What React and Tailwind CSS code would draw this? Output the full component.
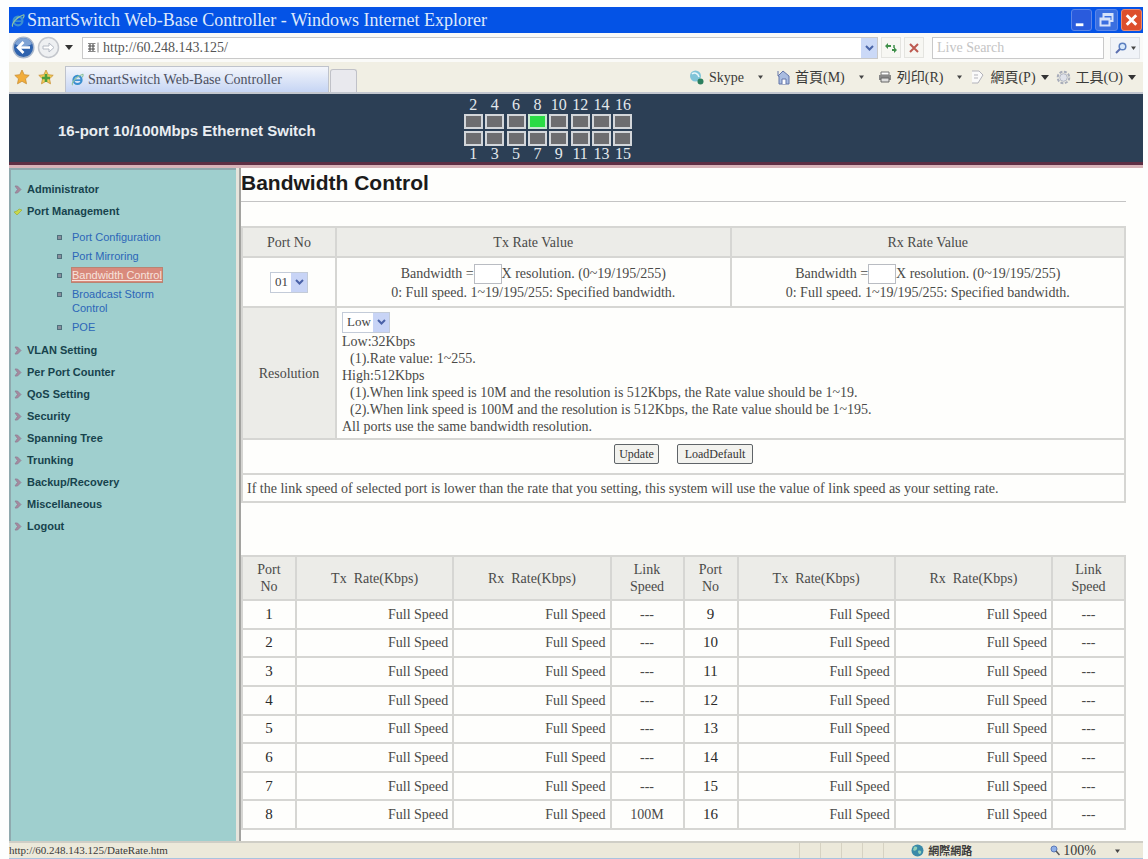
import React from "react";

const serif = 'font-["Liberation_Serif","Noto_Sans_CJK_TC",serif]';
const sans = 'font-["Liberation_Sans",Arial,sans-serif]';

const topPorts = [2, 4, 6, 8, 10, 12, 14, 16];
const bottomPorts = [1, 3, 5, 7, 9, 11, 13, 15];

function Caret() {
  return (
    <svg className="h-[5px] w-[8px] shrink-0" viewBox="0 0 8 5" aria-hidden="true">
      <path d="M0 0h8L4 5z" fill="#333" />
    </svg>
  );
}

function SmallCaret() {
  return (
    <svg className="h-[4px] w-[5px] shrink-0" viewBox="0 0 5 4" aria-hidden="true">
      <path d="M0 .5h5L2.500 4z" fill="#444" />
    </svg>
  );
}

function IeIcon({ className }) {
  return (
    <svg className={className} viewBox="0 0 16 16" aria-hidden="true">
      <circle cx="8" cy="8.500" r="5" fill="none" stroke="#3b8fd0" strokeWidth="2.600" />
      <path d="M4 8.800h8.500" stroke="#3b8fd0" strokeWidth="2" />
      <path d="M2 15C0 12 6 4 14.500 1.500c1 .8 0 3-1 4" fill="none" stroke="#8fc4a0" strokeWidth="1.300" />
    </svg>
  );
}

function PageIcon() {
  return (
    <svg className="h-[13px] w-[13px] shrink-0" viewBox="0 0 13 13" aria-hidden="true">
      <path d="M1 2.500h7.500M1 10.500h7.500M11 1.500v10" stroke="#888" strokeWidth="1" />
      <path d="M3 3v7M6 3v7M1 5h7M1 8h7" stroke="#555" strokeWidth="1.200" />
    </svg>
  );
}

function TitleBar() {
  return (
    <header className="flex h-[26px] items-center bg-[#0453e6] pl-[2px] pr-[1px]">
      <IeIcon className="mr-[2px] h-[15px] w-[14px]" />
      <h1 className="flex-1 whitespace-nowrap text-[18px] leading-[24px] text-[#dfe9fb]">
        SmartSwitch Web-Base Controller - Windows Internet Explorer
      </h1>
      <div className="flex gap-[3px]">
        <button aria-label="Minimize" className="h-[22px] w-[21px] rounded-[3px] border border-[#5b86e8] bg-[#2a5bdd]">
          <svg viewBox="0 0 20 20" className="h-full w-full" aria-hidden="true">
            <path d="M4 15h8" stroke="#fff" strokeWidth="3" />
          </svg>
        </button>
        <button aria-label="Restore" className="h-[22px] w-[23px] rounded-[3px] border border-[#5b86e8] bg-[#3a6fe0]">
          <svg viewBox="0 0 20 20" className="h-full w-full" aria-hidden="true">
            <path d="M7 8V4h9v7h-3M7 5h9" fill="none" stroke="#d5e2fa" strokeWidth="2" />
            <path d="M4 8.500h9v7H4zM4 9.500h9" fill="none" stroke="#d5e2fa" strokeWidth="2" />
          </svg>
        </button>
        <button aria-label="Close" className="h-[22px] w-[21px] rounded-[3px] border border-[#e88a70] bg-[#dd4f2c]">
          <svg viewBox="0 0 20 20" className="h-full w-full" aria-hidden="true">
            <path d="M5 5l10 10M15 5L5 15" stroke="#fff" strokeWidth="3" />
          </svg>
        </button>
      </div>
    </header>
  );
}

function AddressRow() {
  return (
    <div className="flex h-[29px] items-center bg-[#fafaf8] pl-[3px] pr-[3px]">
      <button aria-label="Back">
        <svg className="h-[23px] w-[23px]" viewBox="0 0 23 23" aria-hidden="true">
          <circle cx="11.500" cy="11.500" r="10.300" fill="#2f63ae" stroke="#a9b7cb" strokeWidth="1.500" />
          <path d="M3 8a9 9 0 0 1 17 0c-5 3-12 3-17 0z" fill="#7fa3d4" />
          <path d="M18 11.500H6M11.500 6L6 11.500l5.500 5.500" fill="none" stroke="#fff" strokeWidth="2.600" />
        </svg>
      </button>
      <button aria-label="Forward" className="ml-[2px]">
        <svg className="h-[23px] w-[23px]" viewBox="0 0 23 23" aria-hidden="true">
          <circle cx="11.500" cy="11.500" r="10" fill="#eef0f2" stroke="#c3c6cc" strokeWidth="1.500" />
          <path d="M12 7l5 4.500-5 4.500v-3H6v-3h6z" fill="#fff" stroke="#b4bac4" />
        </svg>
      </button>
      <button aria-label="Recent pages" className="ml-[5px]">
        <Caret />
      </button>
      <div className="ml-[9px] flex h-[22px] flex-1 items-center border border-[#c9c9c9] bg-white pl-[4px]">
        <PageIcon />
        <input
          aria-label="Address"
          defaultValue="http://60.248.143.125/"
          className="ml-[3px] min-w-0 flex-1 bg-transparent text-[14px] leading-[18px] text-[#555] outline-none"
        />
        <button aria-label="Address history" className="flex h-full w-[16px] items-center justify-center bg-[#cbd9f7]">
          <svg className="h-[6px] w-[9px]" viewBox="0 0 9 6" aria-hidden="true">
            <path d="M1 1l3.500 3.500L8 1" fill="none" stroke="#4a65a8" strokeWidth="2" />
          </svg>
        </button>
      </div>
      <button aria-label="Refresh" className="ml-[3px] flex h-[21px] w-[20px] items-center justify-center border border-[#e4e4e0] bg-[#f7f7f3]">
        <svg className="h-[12px] w-[14px]" viewBox="0 0 14 12" aria-hidden="true">
          <path d="M1 4l3-3v2h3v2H4v2z" fill="#3f8f4a" />
          <path d="M13 8l-3 3V9H8V7h2V5z" fill="#3f8f4a" />
          <path d="M10 3v3" stroke="#3f8f4a" strokeWidth="1.500" />
        </svg>
      </button>
      <button aria-label="Stop" className="ml-[3px] flex h-[21px] w-[20px] items-center justify-center border border-[#e4e4e0] bg-[#f7f7f3]">
        <svg className="h-[10px] w-[10px]" viewBox="0 0 10 10" aria-hidden="true">
          <path d="M1 1l8 8M9 1L1 9" stroke="#bd5a50" strokeWidth="2" />
        </svg>
      </button>
      <input
        aria-label="Search"
        placeholder="Live Search"
        className="ml-[8px] h-[22px] w-[172px] border border-[#c9c9c9] bg-white px-[4px] text-[14px] text-[#555] outline-none placeholder:text-[#c4c4c4]"
      />
      <div className="ml-[6px] flex h-[22px] w-[30px] items-center justify-center gap-[4px] border border-[#dcdfe4] bg-[#f0f3f8]">
        <button aria-label="Run search">
          <svg className="h-[12px] w-[12px]" viewBox="0 0 12 12" aria-hidden="true">
            <circle cx="7.500" cy="4.500" r="3.300" fill="#d7e8fb" stroke="#5b7fc0" strokeWidth="1.500" />
            <path d="M5 7L1 11" stroke="#5b6fb0" strokeWidth="2" />
          </svg>
        </button>
        <button aria-label="Search options">
          <SmallCaret />
        </button>
      </div>
    </div>
  );
}

function Star({ fill, children }) {
  return (
    <svg className="h-[16px] w-[16px]" viewBox="0 0 16 16" aria-hidden="true">
      <path d="M8 1l2.200 4.700 5 .6-3.700 3.500 1 5L8 12.300 3.500 14.800l1-5L.8 6.300l5-.6z" fill={fill} stroke="#c98f35" strokeWidth=".8" />
      {children}
    </svg>
  );
}

function TabRow() {
  const command = "flex items-center gap-[5px] whitespace-nowrap";
  return (
    <div className="flex h-[32px] items-center border-b-2 border-[#c3c7cf] bg-[#f1efe4] pr-[7px]">
      <div className="flex w-[56px] shrink-0 items-center gap-[8px] pl-[5px]">
        <button aria-label="Favorites">
          <Star fill="#f2ad3a" />
        </button>
        <button aria-label="Add to favorites">
          <Star fill="#f0cf58">
            <path d="M8 5v8M4 9h8" stroke="#4d9d3c" strokeWidth="2.600" />
          </Star>
        </button>
      </div>
      <div className="flex h-[26px] w-[264px] shrink-0 items-center self-end border border-b-0 border-[#bfc3cc] bg-gradient-to-b from-[#f4f6fb] to-[#c6d5f4] pl-[5px]">
        <IeIcon className="h-[13px] w-[13px]" />
        <span className="ml-[4px] whitespace-nowrap text-[14px] text-[#4c5060]">SmartSwitch Web-Base Controller</span>
      </div>
      <button aria-label="New tab" className="ml-[1px] h-[23px] w-[27px] shrink-0 self-end rounded-t-[3px] border border-b-0 border-[#c0c1c8] bg-[#e9e9ee]" />
      <nav aria-label="Commands" className="ml-auto flex items-center text-[14px] text-[#3a3a38]">
        <button className={command}>
          <svg className="h-[15px] w-[15px]" viewBox="0 0 15 15" aria-hidden="true">
            <circle cx="6.500" cy="6" r="5.500" fill="#7fc4d8" />
            <path d="M3 4c2-2 6-1 7 3" fill="none" stroke="#e8f7fb" strokeWidth="1.500" />
            <circle cx="11.500" cy="11.500" r="3" fill="#2c7f5e" />
          </svg>
          Skype
        </button>
        <span className="mx-[14px] flex"><SmallCaret /></span>
        <button className={command}>
          <svg className="h-[15px] w-[13px]" viewBox="0 0 13 15" aria-hidden="true">
            <path d="M1 6l5-5 6 5v8H2V6z" fill="#a9bce0" stroke="#6375a8" />
            <path d="M5 14V9h4v5M1 1v5" fill="#fff" stroke="#6375a8" />
          </svg>
          首頁(M)
        </button>
        <span className="mx-[14px] flex"><SmallCaret /></span>
        <button className={command}>
          <svg className="h-[12px] w-[14px]" viewBox="0 0 14 12" aria-hidden="true">
            <path d="M3 1h8v3H3z" fill="#fff" stroke="#777" />
            <path d="M1 4h12v5H1z" fill="#888" />
            <path d="M3 7h8v4H3z" fill="#ddd" stroke="#666" />
          </svg>
          列印(R)
        </button>
        <span className="ml-[14px] mr-[8px] flex"><SmallCaret /></span>
        <button className={command}>
          <svg className="h-[14px] w-[15px]" viewBox="0 0 15 14" aria-hidden="true">
            <path d="M2 1h7l4 4-5 8H2" fill="#fafafa" stroke="#b3b3ba" />
            <path d="M4 5h4M4 8h4" stroke="#b3b3ba" />
          </svg>
          網頁(P)
          <Caret />
        </button>
        <button className={command + " ml-[7px]"}>
          <svg className="h-[15px] w-[15px]" viewBox="0 0 15 15" aria-hidden="true">
            <circle cx="7.500" cy="7.500" r="5.800" fill="none" stroke="#a8adba" strokeWidth="2" strokeDasharray="3 1.500" />
            <circle cx="7.500" cy="7.500" r="3.800" fill="#dfe2ea" stroke="#b0b5c2" />
          </svg>
          工具(O)
          <Caret />
        </button>
      </nav>
    </div>
  );
}

function Led({ on }) {
  return (
    <span
      className={
        on
          ? "mx-auto h-[15px] w-[19px] border-2 border-[#c8e8d0] bg-[#2bdc45]"
          : "mx-auto h-[15px] w-[19px] border-2 border-[#d3d6da] bg-[#6d6d70]"
      }
    />
  );
}

function SwitchBanner() {
  return (
    <section className="flex h-[74px] border-b-[3px] border-[#d8b3b8] bg-[#2c3f55] shadow-[inset_0_-3px_0_#5e2f44]">
      <h2 className={`${sans} w-[40%] shrink-0 whitespace-nowrap pl-[49px] pt-[27px] text-[15px] font-bold leading-[20px] text-[#e9edf1]`}>
        16-port 10/100Mbps Ethernet Switch
      </h2>
      <div className="grid w-[171px] grid-cols-8 content-start gap-y-[2px] pt-[4px] text-center text-[16px] leading-[14px] text-[#e3e8ec]">
        {topPorts.map((n) => <span key={n}>{n}</span>)}
        {topPorts.map((n) => <Led key={n} on={n === 8} />)}
        {bottomPorts.map((n) => <Led key={n} />)}
        {bottomPorts.map((n) => <span key={n} className="-mt-px">{n}</span>)}
      </div>
    </section>
  );
}

const subItems = ["Port Configuration", "Port Mirroring", "Bandwidth Control", "Broadcast Storm Control", "POE"];
const laterItems = [
  "VLAN Setting",
  "Per Port Counter",
  "QoS Setting",
  "Security",
  "Spanning Tree",
  "Trunking",
  "Backup/Recovery",
  "Miscellaneous",
  "Logout",
];

function MenuItem({ label, open }) {
  return (
    <a href="#menu" className="flex h-[22px] items-center gap-[5px] pl-[5px] text-[11px] font-bold text-[#17434d]">
      <svg className="h-[9px] w-[8px]" viewBox="0 0 8 9" aria-hidden="true">
        {open ? (
          <path d="M0 5l3 3 5-5-3-1-2 2z" fill="#c9d84a" stroke="#9fb04a" strokeWidth=".8" />
        ) : (
          <path d="M1 1l2.500 3.500L1 8h2.500L7 4.500 3.500 1z" fill="#a58a9e" stroke="#8f7f94" strokeWidth=".8" />
        )}
      </svg>
      {label}
    </a>
  );
}

function Sidebar() {
  return (
    <nav aria-label="Switch menu" className={`${sans} w-[227px] shrink-0 border-l-2 border-t-2 border-[#8fa9ae] bg-[#9fcfce] pt-[8px]`}>
      <div className="-ml-[2px]">
        <MenuItem label="Administrator" />
        <MenuItem label="Port Management" open />
        <ul className="flex flex-col gap-[5px] pb-[5px] pt-[8px] text-[11px] leading-[14px]">
          {subItems.map((label) => (
            <li key={label} className="flex pl-[48px]">
              <span className="mr-[10px] mt-[5px] h-[5px] w-[5px] shrink-0 border border-[#4f6f7c] bg-[#8a8f9c]" />
              <a
                href="#page"
                className={
                  label === "Bandwidth Control"
                    ? "bg-[#d98a7c] text-[#f7e3dc] underline outline outline-1 outline-[#b98472]"
                    : "w-[96px] text-[#2c66b8]"
                }
              >
                {label}
              </a>
            </li>
          ))}
        </ul>
        {laterItems.map((label) => <MenuItem key={label} label={label} />)}
      </div>
    </nav>
  );
}

const cell = "border-2 border-[#d6d6d3]";
const head = "border-2 border-[#d6d6d3] bg-[#ecece8] font-normal";

function Dropdown({ label, options, className }) {
  return (
    <span className={`relative inline-block h-[21px] border border-[#c3cbd8] bg-white align-top ${className}`}>
      <select aria-label={label} className="block h-full w-full appearance-none bg-transparent pl-[4px] text-[13px] leading-[18px] text-[#444] outline-none">
        {options.map((o) => <option key={o}>{o}</option>)}
      </select>
      <span className="pointer-events-none absolute inset-y-0 right-0 flex w-[16px] items-center justify-center bg-[#c8d4f6]">
        <svg className="h-[6px] w-[9px]" viewBox="0 0 9 6" aria-hidden="true">
          <path d="M1 1l3.500 3.500L8 1" fill="none" stroke="#4a62a8" strokeWidth="2" />
        </svg>
      </span>
    </span>
  );
}

function RateCell({ name }) {
  return (
    <td className={`${cell} text-center`}>
      <label className="flex items-center justify-center">
        Bandwidth =
        <input aria-label={name} className="h-[20px] w-[28px] border border-[#b9bcc2] bg-white px-[2px] outline-none" />
        X resolution. (0~19/195/255)
      </label>
      <p>0: Full speed. 1~19/195/255: Specified bandwidth.</p>
    </td>
  );
}

function ControlTable() {
  const button = "h-[20px] rounded-[2px] border border-[#5f6468] bg-[#f2f2ee] text-[12px] leading-[16px] text-[#333]";
  const ports = Array.from({ length: 16 }, (_, i) => String(i + 1).padStart(2, "0"));
  return (
    <table className="w-full table-fixed border-collapse text-[14px] leading-[17px]">
      <colgroup>
        <col className="w-[94px]" />
        <col />
        <col />
      </colgroup>
      <tbody>
        <tr className="h-[30px]">
          <th className={head}>Port No</th>
          <th className={head}>Tx Rate Value</th>
          <th className={head}>Rx Rate Value</th>
        </tr>
        <tr className="h-[50px]">
          <td className={`${cell} text-center`}>
            <Dropdown label="Port No" options={ports} className="w-[38px]" />
          </td>
          <RateCell name="Tx bandwidth" />
          <RateCell name="Rx bandwidth" />
        </tr>
        <tr className="h-[132px]">
          <th className={head}>Resolution</th>
          <td className={`${cell} px-[5px]`} colSpan={2}>
            <Dropdown label="Resolution" options={["Low", "High"]} className="w-[48px]" />
            <p>Low:32Kbps</p>
            <p className="pl-[8px]">(1).Rate value: 1~255.</p>
            <p>High:512Kbps</p>
            <p className="pl-[8px]">(1).When link speed is 10M and the resolution is 512Kbps, the Rate value should be 1~19.</p>
            <p className="pl-[8px]">(2).When link speed is 100M and the resolution is 512Kbps, the Rate value should be 1~195.</p>
            <p>All ports use the same bandwidth resolution.</p>
          </td>
        </tr>
        <tr className="h-[35px]">
          <td className={cell} colSpan={3}>
            <div className="flex justify-center gap-[18px] pb-[5px]">
              <button className={`${button} w-[45px]`}>Update</button>
              <button className={`${button} w-[76px]`}>LoadDefault</button>
            </div>
          </td>
        </tr>
        <tr className="h-[28px]">
          <td className={`${cell} px-[4px]`} colSpan={3}>
            If the link speed of selected port is lower than the rate that you setting, this system will use the value of link speed as your setting rate.
          </td>
        </tr>
      </tbody>
    </table>
  );
}

function PortCells({ port }) {
  return (
    <>
      <td className={`${cell} text-center text-[15px] text-[#2a2a2a]`}>{port}</td>
      <td className={`${cell} pr-[4px] text-right`}>Full Speed</td>
      <td className={`${cell} pr-[4px] text-right`}>Full Speed</td>
      <td className={`${cell} text-center`}>{port === 8 ? "100M" : "---"}</td>
    </>
  );
}

function HeadCells() {
  return (
    <>
      <th className={head}>Port<br />No</th>
      <th className={`${head} whitespace-pre`}>{"Tx  Rate(Kbps)"}</th>
      <th className={`${head} whitespace-pre`}>{"Rx  Rate(Kbps)"}</th>
      <th className={head}>Link<br />Speed</th>
    </>
  );
}

function StatusTable() {
  return (
    <table className="mt-[52px] h-[275px] w-full table-fixed border-collapse text-[14px] leading-[17px]">
      <colgroup>
        <col className="w-[54px]" />
        <col />
        <col />
        <col className="w-[73px]" />
        <col className="w-[54px]" />
        <col />
        <col />
        <col className="w-[73px]" />
      </colgroup>
      <thead>
        <tr className="h-[44px]">
          <HeadCells />
          <HeadCells />
        </tr>
      </thead>
      <tbody>
        {bottomPorts.map((_, i) => (
          <tr key={i}>
            <PortCells port={i + 1} />
            <PortCells port={i + 9} />
          </tr>
        ))}
      </tbody>
    </table>
  );
}

function StatusBar() {
  return (
    <footer className="flex h-[19px] items-center border-b-2 border-t-2 border-b-[#a9c3e0] border-t-[#cfcec6] bg-[#ece9da] text-[#3a3a38]">
      <span className="flex-1 text-[11px]">http://60.248.143.125/DateRate.htm</span>
      <div className="flex h-full">
        {[0, 1, 2, 3, 4].map((i) => <span key={i} className="w-[21px] border-l border-[#d6d2c2]" />)}
      </div>
      <div className="flex w-[146px] items-center gap-[4px] pl-[7px]">
        <svg className="h-[13px] w-[13px]" viewBox="0 0 13 13" aria-hidden="true">
          <circle cx="6.500" cy="6.500" r="6" fill="#3a8aa8" />
          <path d="M3 3c2-1 4 0 3 2S3 7 2 6zM7 7c2-1 4 0 3 2s-3 1-3-2z" fill="#8fd0b8" />
        </svg>
        <span className="whitespace-nowrap text-[11px] font-bold leading-[14px]">網際網路</span>
      </div>
      <button className="flex items-center gap-[3px] pr-[23px] text-[14px] leading-[14px]">
        <svg className="h-[11px] w-[10px]" viewBox="0 0 10 11" aria-hidden="true">
          <circle cx="4" cy="4" r="3" fill="#8fb0e8" stroke="#5a78b8" />
          <path d="M6 6l3.500 4" stroke="#555" strokeWidth="1.500" />
        </svg>
        100%
        <span className="ml-[16px]"><SmallCaret /></span>
      </button>
    </footer>
  );
}

export default function App() {
  return (
    <div className={`${serif} flex min-h-screen flex-col bg-[#fdfefe] pl-[9px] pr-[5px] pt-[7px]`}>
      <TitleBar />
      <AddressRow />
      <TabRow />
      <SwitchBanner />
      <div className="flex flex-1">
        <Sidebar />
        <main className="min-w-0 flex-1 border-l-[3px] border-[#e6e4dc] bg-[#fefefc] text-[#4a4a48]">
          <div className="h-full border-l-2 border-[#a3a3a0] pb-[11px] pr-[17px]">
            <h2 className={`${sans} border-b border-[#c4c4c4] pb-[5px] pt-[2px] text-[21px] font-bold leading-[26px] text-[#1b1b1b]`}>
              Bandwidth Control
            </h2>
            <div className="pt-[24px]">
              <ControlTable />
              <StatusTable />
            </div>
          </div>
        </main>
      </div>
      <StatusBar />
    </div>
  );
}
